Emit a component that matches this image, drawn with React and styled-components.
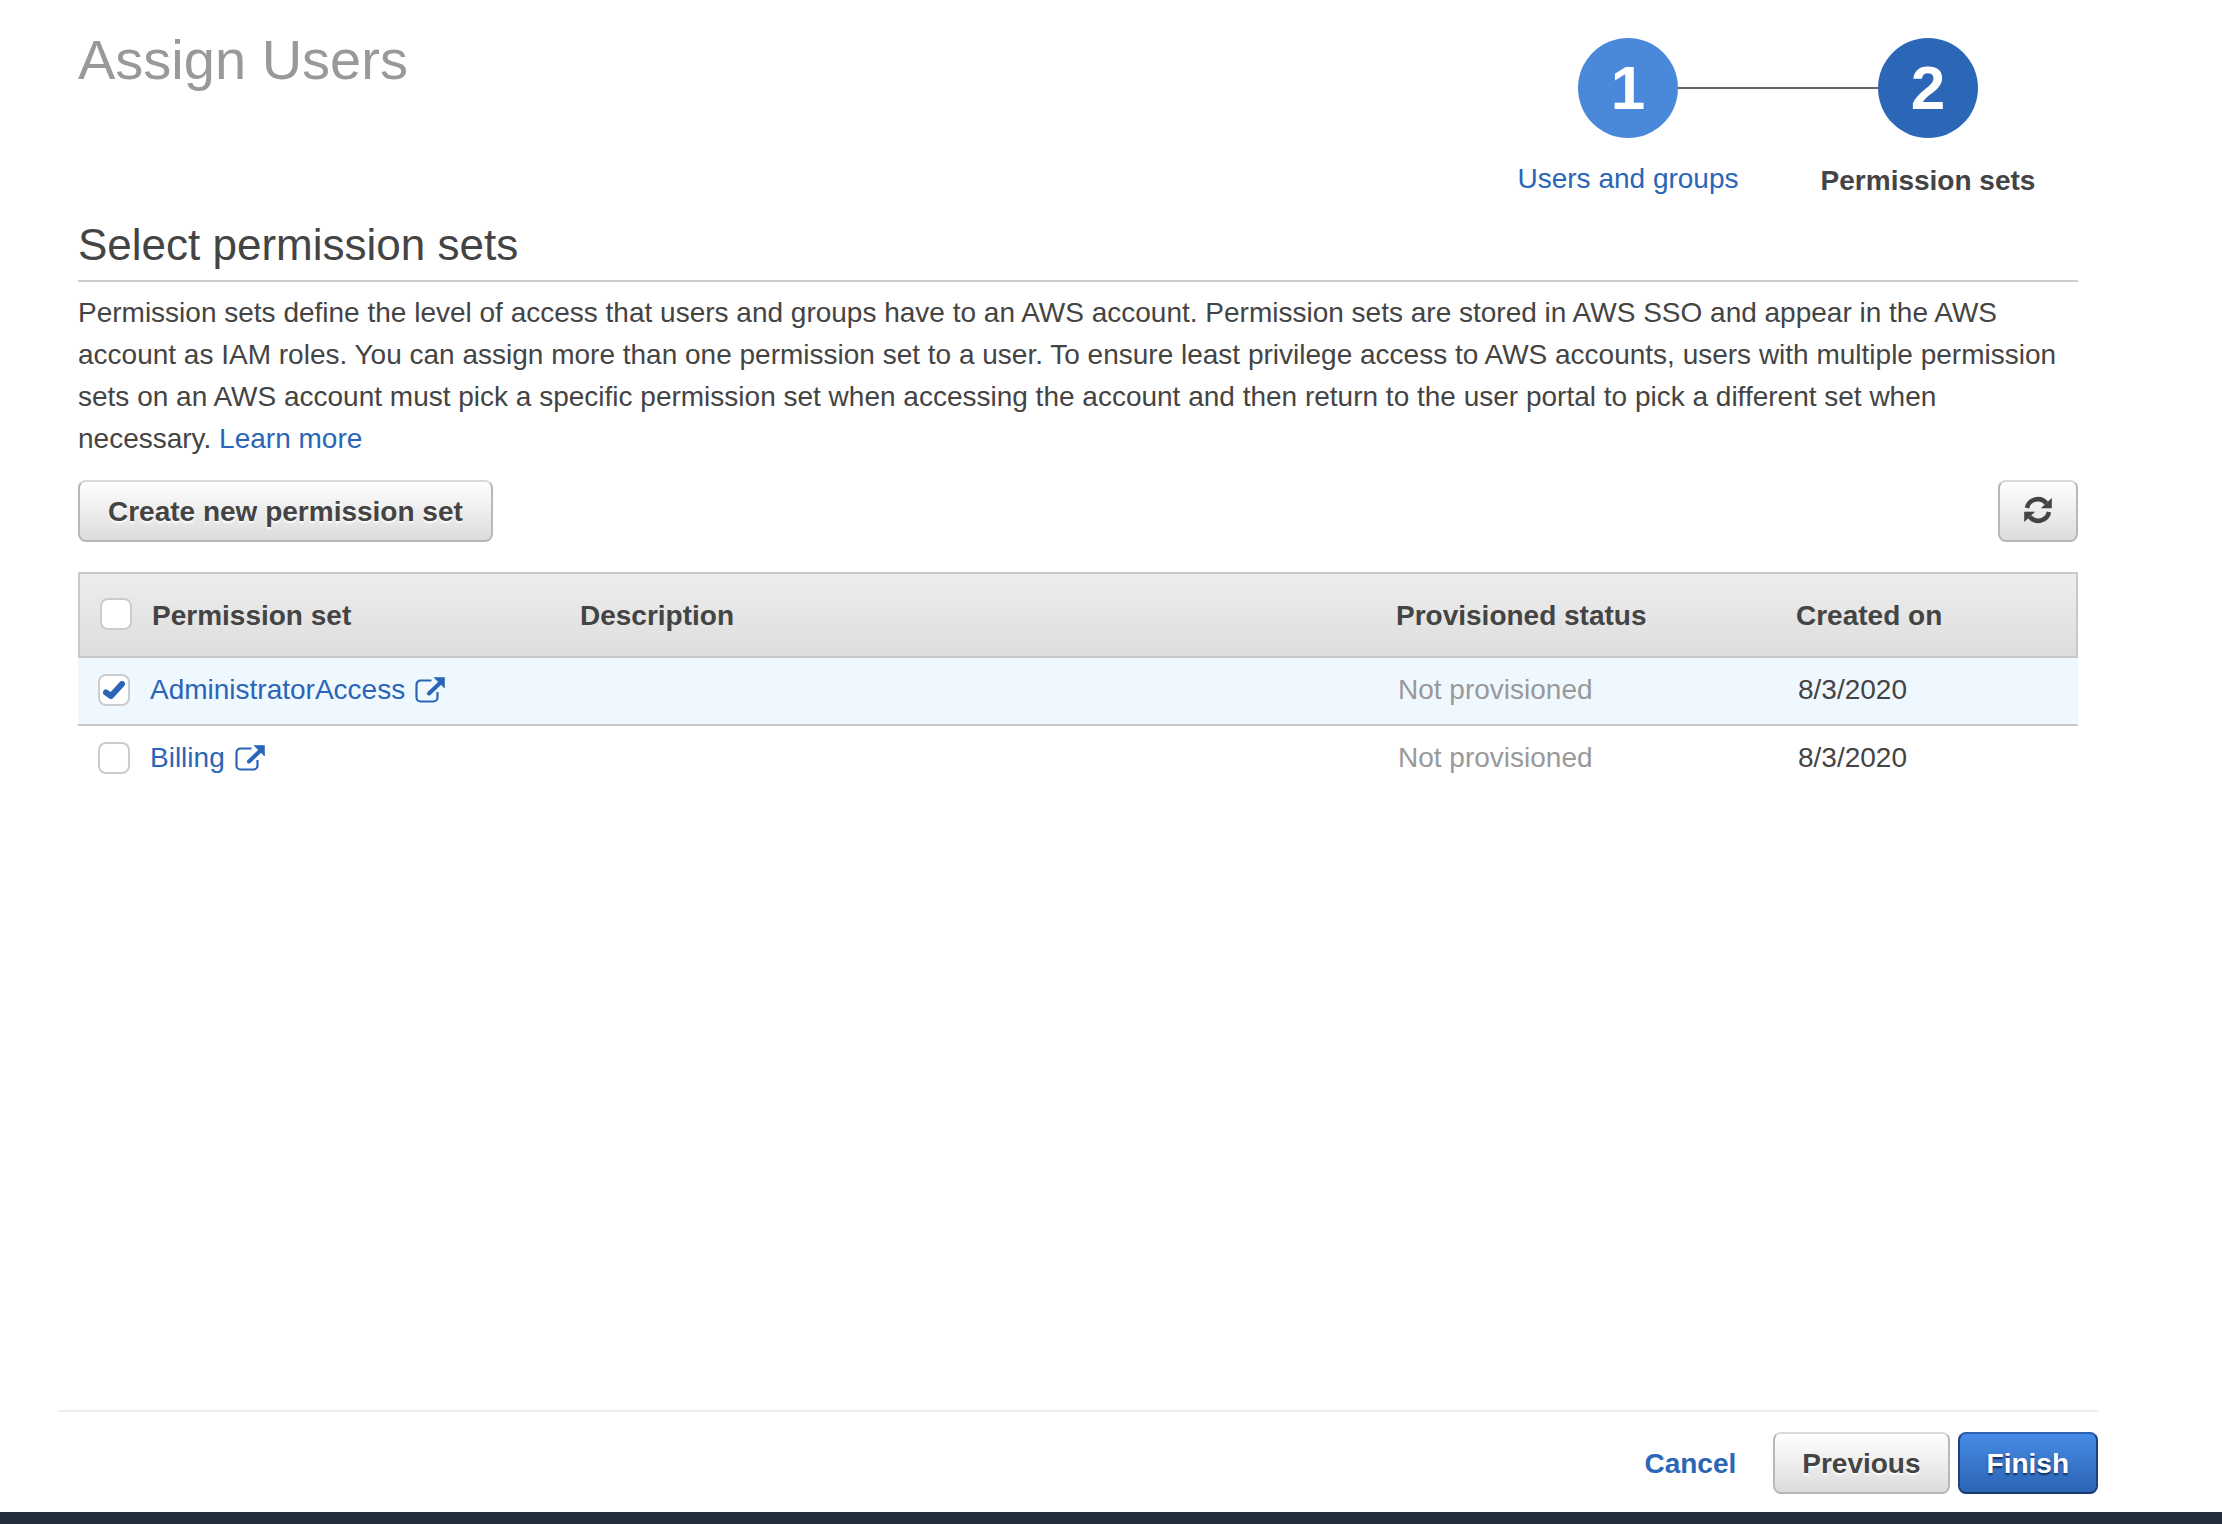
import React from 'react';
import styled, { createGlobalStyle } from 'styled-components';

const GlobalStyle = createGlobalStyle`
  * { box-sizing: border-box; }
  body {
    margin: 0;
    background: #fff;
    color: #444;
    font: 28px/42px "Helvetica Neue", "Liberation Sans", Arial, sans-serif;
  }
`;

const Page = styled.div`
  display: flex;
  flex-direction: column;
  min-height: 100vh;
  border-bottom: 12px solid #252e3d;
  padding: 0 124px 0 58px;
`;

const Content = styled.main`
  flex: 1;
  padding: 0 20px;
`;

const Header = styled.header`
  display: flex;
  justify-content: space-between;
  align-items: flex-start;
  height: 215px;
`;

const Title = styled.h1`
  margin: 24px 0 0;
  color: #999;
  font-size: 56px;
  font-weight: normal;
  line-height: 72px;
`;

const Steps = styled.ol`
  display: flex;
  margin: 38px 0 0;
  padding: 0;
  list-style: none;
`;

const Step = styled.li`
  display: flex;
  flex-direction: column;
  align-items: center;
  gap: ${props => props.$current ? '22px' : '20px'};
  width: 300px;
  color: #444;
  font-weight: ${props => props.$current ? 'bold' : 'normal'};
`;

const Track = styled.div`
  display: flex;
  align-items: center;
  width: 100%;
  &:before, &:after {
    content: '';
    flex: 1;
    height: 2px;
    background: #666;
  }
  ${Step}:first-child &:before, ${Step}:last-child &:after {
    background: none;
  }
`;

const Circle = styled.span`
  width: 100px;
  border-radius: 50%;
  background: ${props => props.$current ? '#2c66b7' : '#4a88d9'};
  color: #fff;
  font-size: 62px;
  font-weight: bold;
  line-height: 100px;
  text-align: center;
`;

const Link = styled.a`
  color: #2a65b8;
  text-decoration: none;
`;

const SectionTitle = styled.h2`
  margin: 0;
  padding-bottom: 5px;
  border-bottom: 2px solid #ccc;
  font-size: 44px;
  font-weight: normal;
  line-height: 60px;
`;

const Description = styled.p`
  margin: 10px 0 20px;
  padding-right: 8px;
`;

const Toolbar = styled.div`
  display: flex;
  justify-content: space-between;
  margin-bottom: 30px;
`;

const Button = styled.button`
  height: 62px;
  padding: 2px 28px 0;
  border: 2px solid;
  border-color: ${props => props.$primary ? '#2a62b0 #1c447c #163a6c' : '#d9d9d9 #b8b8b8 #b5b5b5'};
  border-radius: 8px;
  background: ${props => props.$primary
    ? 'linear-gradient(#478be6, #2b64b4)'
    : 'linear-gradient(#fff, #dcdcdc)'};
  color: ${props => props.$primary ? '#fff' : '#444'};
  font: bold 28px/42px "Helvetica Neue", "Liberation Sans", Arial, sans-serif;
  text-shadow: 0 2px 2px ${props => props.$primary ? '#122f58' : '#fff'};
`;

const IconButton = styled(Button)`
  display: flex;
  align-items: center;
  justify-content: center;
  width: 80px;
  padding: 0 0 2px;
`;

const PlainButton = styled(Button)`
  border-color: transparent;
  background: none;
  color: #2a65b8;
  text-shadow: none;
`;

const Table = styled.table`
  width: 100%;
  table-layout: fixed;
  border-spacing: 0;
`;

const Th = styled.th`
  width: ${props => props.$width};
  height: 86px;
  padding: 2px 18px 0;
  border: solid #c8c8c8;
  border-width: 2px 0;
  text-align: left;
  &:first-child { border-left-width: 2px; padding: 0 0 2px 20px; }
  &:last-child { border-right-width: 2px; }
  label { padding-top: 4px; }
`;

const HeadRow = styled.tr`
  background: linear-gradient(#eee, #ddd);
`;

const Row = styled.tr`
  background: ${props => props.$selected ? '#f0f8ff' : '#fff'};
`;

const Td = styled.td`
  height: 68px;
  padding: 0 20px 2px;
  border-bottom: 2px solid ${props => props.$last ? 'transparent' : '#c8c8c8'};
  color: ${props => props.$muted ? '#999' : '#444'};
`;

const Cell = styled.div`
  display: flex;
  align-items: center;
  gap: 20px;
`;

const NameLink = styled(Link)`
  display: flex;
  align-items: center;
  gap: 10px;
`;

const Checkbox = styled.input.attrs({ type: 'checkbox' })`
  appearance: none;
  width: 32px;
  height: 32px;
  margin: 0;
  border: 2px solid #ccc;
  border-radius: 8px;
  background: #fff;
`;

const CheckWrap = styled.span`
  display: grid;
  place-items: center;
  > * { grid-area: 1 / 1; }
  svg { pointer-events: none; }
`;

const Footer = styled.footer`
  display: flex;
  justify-content: flex-end;
  gap: 8px;
  padding: 20px 0 18px;
  border-top: 2px solid #eee;
  ${Button} {
    padding-left: 27px;
    padding-right: 27px;
  }
`;

const RefreshIcon = () =>
  <svg width='28' height='28' viewBox='0 0 28 28' fill='none' aria-hidden='true'>
    <path d='M3 12A11 11 0 0 1 22.300 7.300M25 16A11 11 0 0 1 5.700 20.700' stroke='#444' strokeWidth='4.600' />
    <path d='M27.500 2.500V12H17.500zM.5 25.500V16H10.500z' fill='#444' stroke='#444' strokeWidth='.6' strokeLinejoin='round' />
  </svg>

const ExternalIcon = () =>
  <svg width='30' height='26' viewBox='0 0 30 26' fill='none' aria-hidden='true'>
    <path d='M16.500 3.500H5.500a4 4 0 0 0-4 4v13a4 4 0 0 0 4 4h13a4 4 0 0 0 4-4V15' stroke='#2a65b8' strokeWidth='2.200' />
    <path d='M14 16.500 25 6' stroke='#2a65b8' strokeWidth='4' strokeLinecap='round' />
    <path d='M19 .5h10.500v10.500z' fill='#2a65b8' stroke='#2a65b8' strokeWidth='.6' strokeLinejoin='round' />
  </svg>

const CheckIcon = () =>
  <svg width='22' height='18' viewBox='0 0 22 18' fill='none' aria-hidden='true'>
    <path d='M3 11.500l5 3.500L19 3' stroke='#2a65b8' strokeWidth='6' strokeLinecap='round' strokeLinejoin='round' />
  </svg>

const Check = ({ label, checked, id }) =>
  <CheckWrap>
    <Checkbox id={id} aria-label={label} defaultChecked={checked} />
    {checked && <CheckIcon />}
  </CheckWrap>

const permissionSets = [
  { name: 'AdministratorAccess', status: 'Not provisioned', created: '8/3/2020', selected: true },
  { name: 'Billing', status: 'Not provisioned', created: '8/3/2020', selected: false },
];

export default function App() {
  return (
    <Page>
      <GlobalStyle />
      <Content>
        <Header>
          <Title>Assign Users</Title>
          <Steps>
            <Step>
              <Track><Circle>1</Circle></Track>
              <Link href='#users'>Users and groups</Link>
            </Step>
            <Step $current>
              <Track><Circle $current>2</Circle></Track>
              <span>Permission sets</span>
            </Step>
          </Steps>
        </Header>
        <SectionTitle>Select permission sets</SectionTitle>
        <Description>
          Permission sets define the level of access that users and groups have to an AWS account. Permission sets are stored in AWS SSO and appear in the AWS account as IAM roles. You can assign more than one permission set to a user. To ensure least privilege access to AWS accounts, users with multiple permission sets on an AWS account must pick a specific permission set when accessing the account and then return to the user portal to pick a different set when necessary. <Link href='#learn'>Learn more</Link>
        </Description>
        <Toolbar>
          <Button type='button'>Create new permission set</Button>
          <IconButton type='button' aria-label='Refresh'><RefreshIcon /></IconButton>
        </Toolbar>
        <Table>
          <thead>
            <HeadRow>
              <Th $width='24.2%'>
                <Cell>
                  <Check id='all' />
                  <label htmlFor='all'>Permission set</label>
                </Cell>
              </Th>
              <Th $width='40.8%'>Description</Th>
              <Th $width='20%'>Provisioned status</Th>
              <Th $width='15%'>Created on</Th>
            </HeadRow>
          </thead>
          <tbody>
            {permissionSets.map((set, i) =>
              <Row key={set.name} $selected={set.selected}>
                <Td $last={i === permissionSets.length - 1}>
                  <Cell>
                    <Check label={set.name} checked={set.selected} />
                    <NameLink href='#set'>{set.name} <ExternalIcon /></NameLink>
                  </Cell>
                </Td>
                <Td $last={i === permissionSets.length - 1} />
                <Td $muted $last={i === permissionSets.length - 1}>{set.status}</Td>
                <Td $last={i === permissionSets.length - 1}>{set.created}</Td>
              </Row>
            )}
          </tbody>
        </Table>
      </Content>
      <Footer>
        <PlainButton type='button'>Cancel</PlainButton>
        <Button type='button'>Previous</Button>
        <Button type='button' $primary>Finish</Button>
      </Footer>
    </Page>
  );
}
